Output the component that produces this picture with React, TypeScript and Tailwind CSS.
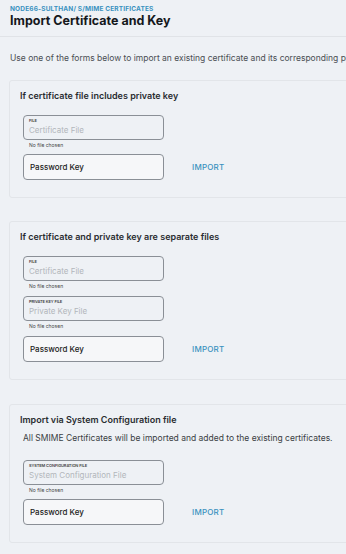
const font = { fontFamily: 'Inter, "Noto Sans", sans-serif' }

function FileField({ label, placeholder }: { label: string; placeholder: string }) {
  return (
    <div>
      <div className="w-[141px] h-[25px] rounded-[4px] border border-[#8a8f96] px-[5px] pt-[3px] leading-none">
        <div className="text-[4px] font-semibold uppercase text-[#444] tracking-tight">{label}</div>
        <div className="text-[8px] text-[#b2b6bb] mt-[3px]">{placeholder}</div>
      </div>
      <div className="text-[5px] text-[#444] pl-[6px] mt-[1px] leading-[8px]">No file chosen</div>
    </div>
  )
}

function PasswordRow() {
  return (
    <div className="flex items-center">
      <div className="w-[141px] h-[26px] rounded-[4px] border border-[#8a8f96] bg-[#f6f7f9] flex items-center px-[6px]">
        <span className="text-[8px] font-medium text-[#222]">Password Key</span>
      </div>
      <span className="ml-[28px] text-[8px] font-medium text-[#3a92bf] tracking-wide">IMPORT</span>
    </div>
  )
}

function Card({ title, children }: { title: string; children: React.ReactNode }) {
  return (
    <div className="ml-[9px] w-[420px] rounded-[3px] border border-[#e2e5e9] pl-[10px]">
      <div className="text-[9px] font-semibold text-[#2a2d31] pt-[10px] leading-[10px]">{title}</div>
      {children}
    </div>
  )
}

export default function App() {
  return (
    <div className="w-[346px] h-[554px] overflow-hidden bg-[#eef1f5]" style={font}>
      <div className="px-[10px] pt-[5px] h-[37px] border-b border-[#e0e3e7]">
        <div className="text-[6.5px] font-bold uppercase text-[#3a92bf] leading-[8px] tracking-wide">
          NODE66-SULTHAN/ S/MIME CERTIFICATES
        </div>
        <div className="text-[12.5px] font-bold text-[#15181c] leading-[16px]">
          Import Certificate and Key
        </div>
      </div>

      <div className="px-[10px] pt-[16px] text-[8.5px] text-[#4a4e53] whitespace-nowrap leading-[10px]">
        Use one of the forms below to import an existing certificate and its corresponding private key.
      </div>

      <div className="mt-[17px]">
        <Card title="If certificate file includes private key">
          <div className="pl-[3px] pt-[14px] pb-[17px] flex flex-col gap-[5px]">
            <FileField label="FILE" placeholder="Certificate File" />
            <PasswordRow />
          </div>
        </Card>
      </div>

      <div className="mt-[23px]">
        <Card title="If certificate and private key are separate files">
          <div className="pl-[3px] pt-[14px] pb-[17px] flex flex-col gap-[6px]">
            <FileField label="FILE" placeholder="Certificate File" />
            <FileField label="PRIVATE KEY FILE" placeholder="Private Key File" />
            <PasswordRow />
          </div>
        </Card>
      </div>

      <div className="mt-[24px]">
        <Card title="Import via System Configuration file">
          <div className="pl-[3px] pt-[8px] text-[8.5px] text-[#3a3e43] leading-[10px] whitespace-nowrap">
            All SMIME Certificates will be imported and added to the existing certificates.
          </div>
          <div className="pl-[3px] pt-[17px] pb-[17px] flex flex-col gap-[5px]">
            <FileField label="SYSTEM CONFIGURATION FILE" placeholder="System Configuration File" />
            <PasswordRow />
          </div>
        </Card>
      </div>
    </div>
  )
}
